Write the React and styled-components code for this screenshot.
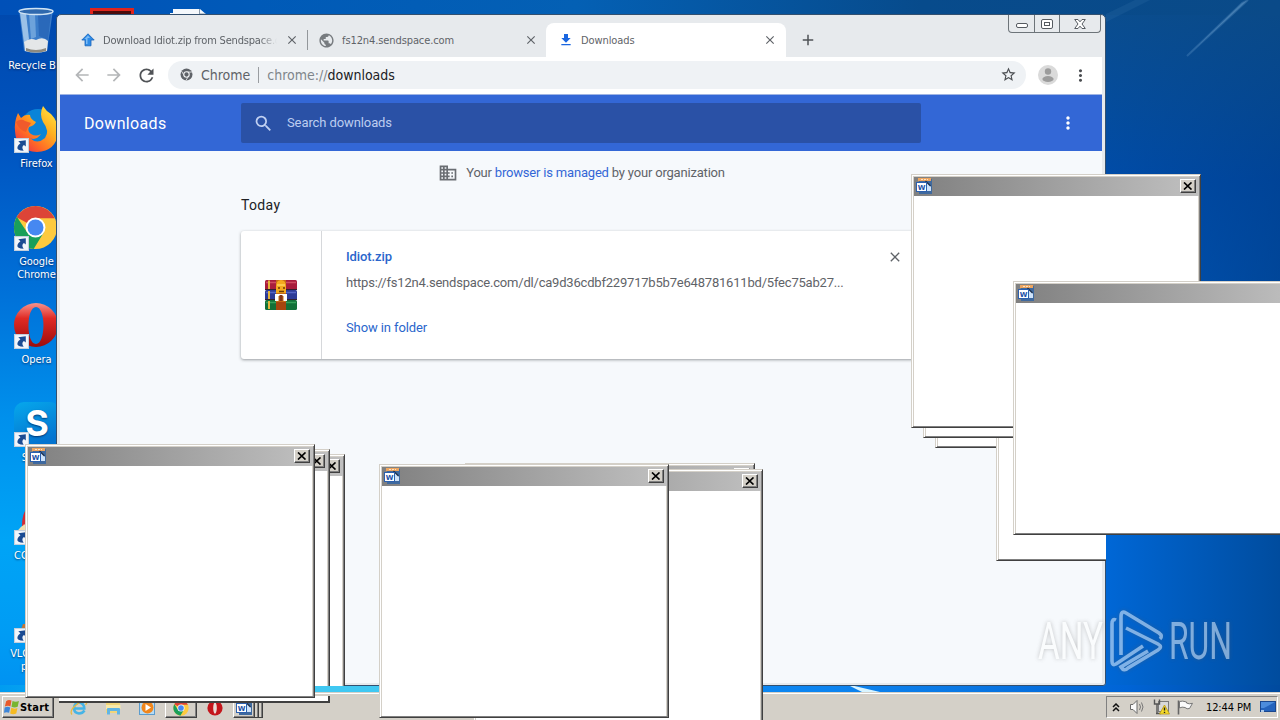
import React from "react";
import styled, { createGlobalStyle, css } from "styled-components";
import {
  MdArrowBack,
  MdArrowForward,
  MdRefresh,
  MdStarBorder,
  MdMoreVert,
  MdSearch,
  MdDomain,
  MdClose,
  MdAdd,
  MdPublic,
  MdFileDownload,
} from "react-icons/md";

const UI_FONT = `"DejaVu Sans Condensed", "DejaVu Sans", sans-serif`;

/* ---------- icons ---------- */

const RecycleBin = () => (
  <svg width="48" height="48" viewBox="0 0 48 48">
    <path d="M7 3 L12 44 Q24 48 35 44 L41 3Z" fill="#4a8ad0" fillOpacity="0.8" />
    <path d="M8 6 L12 36 L17 32 L14 6Z" fill="#c4def4" fillOpacity="0.7" />
    <path d="M17 7 L19 32 L24 30 L23 7Z" fill="#8fbce8" fillOpacity="0.6" />
    <path d="M26 8 L39 6 L36 33 L27 29Z" fill="#1f5cb0" fillOpacity="0.6" />
    <path d="M12 35 Q18 30 24 33 Q31 29 36 34 L35 44 Q24 47 13 44Z" fill="#e4e7e8" />
    <path d="M14 41 Q24 45 34 41 L34 44 Q24 47 14 44Z" fill="#8d8a80" />
    <ellipse cx="24" cy="4.5" rx="17" ry="3" fill="#2f69ae" stroke="#d0e4f4" strokeWidth="1.4" />
  </svg>
);

const Firefox = ({ size = 48 }) => (
  <svg width={size} height={size} viewBox="0 0 48 48">
    <defs>
      <linearGradient id="fox" x1="1" y1="0" x2="0.1" y2="1">
        <stop offset="0" stopColor="#fff04a" />
        <stop offset="0.4" stopColor="#ffb01f" />
        <stop offset="0.7" stopColor="#ff6a26" />
        <stop offset="1" stopColor="#e8264e" />
      </linearGradient>
    </defs>
    <circle cx="26" cy="21" r="17" fill="#0a84d8" />
    <path
      d="M31 1 Q34 6 39 9 Q47 17 46 28 Q44 46 25 47 Q4 46 3 26 Q2 17 6 8 L9 13 Q13 9 18 10 Q18 14 24 17 Q22 21 17 22 Q15 26 19 29 Q24 32 29 29 Q24 36 18 33 Q25 40 33 33 Q38 26 31 17 Q27 9 31 1Z"
      fill="url(#fox)"
    />
    <path d="M4 17 Q9 13 13 16 L19 18 Q15 23 14 27 Q7 25 4 17Z" fill="#f05a2c" />
  </svg>
);

const ChromeLogo = ({ size = 45 }) => (
  <svg width={size} height={size} viewBox="0 0 48 48">
    <circle cx="24" cy="24" r="23" fill="#fdca3f" />
    <path d="M24 24 L3.8 13 A23 23 0 0 1 44.6 14 L24 14Z" fill="#dc4437" />
    <path d="M4.1 12.5 A23 23 0 0 0 22 46.9 L33 29 L15 29Z" fill="#199f5a" />
    <circle cx="24" cy="24" r="10.6" fill="#fff" />
    <circle cx="24" cy="24" r="8.5" fill="#4688f1" />
  </svg>
);

const ChromeMono = () => (
  <svg width="13" height="13" viewBox="0 0 48 48">
    <circle cx="24" cy="24" r="22" fill="#5f6368" />
    <path d="M44 15 H24 M16 29 L6 12 M32 29 L22 46" stroke="#f1f3f4" strokeWidth="3" fill="none" />
    <circle cx="24" cy="24" r="10" fill="#5f6368" stroke="#f1f3f4" strokeWidth="4" />
  </svg>
);

const OperaLogo = ({ size = 46 }) => (
  <svg width={size} height={size} viewBox="0 0 46 46">
    <defs>
      <linearGradient id="opera" x1="0" y1="0" x2="0" y2="1">
        <stop offset="0" stopColor="#f7938c" />
        <stop offset="0.35" stopColor="#e02a24" />
        <stop offset="1" stopColor="#9c0c0c" />
      </linearGradient>
    </defs>
    <path
      fillRule="evenodd"
      d="M23 1 A22 22 0 0 1 23 45 A22 22 0 0 1 23 1Z M23 5 C13 5 13 42 23 42 C33 42 33 5 23 5Z"
      fill="url(#opera)"
    />
  </svg>
);

const SkypeLogo = () => (
  <svg width="46" height="46" viewBox="0 0 46 46">
    <defs>
      <linearGradient id="skype" x1="0" y1="0" x2="0.4" y2="1">
        <stop offset="0" stopColor="#06a8ec" />
        <stop offset="1" stopColor="#0474d0" />
      </linearGradient>
    </defs>
    <rect x="1" y="2" width="46" height="44" rx="10" fill="url(#skype)" />
    <text x="24" y="36" fontSize="36" fontWeight="700" fontFamily="Inter, sans-serif" fill="#fff" textAnchor="middle">
      S
    </text>
  </svg>
);

const CleanerLogo = () => (
  <svg width="46" height="46" viewBox="0 0 46 46">
    <path d="M9 28 Q9 13 16 9 L24 32Z" fill="#d42b34" />
    <path d="M2 38 Q6 27 16 25 L22 40Z" fill="#f2dfb0" />
  </svg>
);

const VlcLogo = () => (
  <svg width="46" height="46" viewBox="0 0 46 46">
    <path d="M13 28 L20 4 H26 L33 28Z" fill="#f07c16" />
    <path d="M4 44 L10 28 H36 L42 44Z" fill="#c0783c" />
  </svg>
);

const ShortcutArrow = () => (
  <svg width="15" height="15" viewBox="0 0 14 14">
    <rect x="0.5" y="0.5" width="13" height="13" fill="#f2f6fb" stroke="#c3cfdd" />
    <path d="M4 3 L11 2 L11 8 L9.3 6.6 Q6.5 8.5 9 12 Q2.5 12 3.2 8.5 Q3.8 6 6 4.8Z" fill="#1b4b92" />
  </svg>
);

const WordDoc = () => (
  <svg width="16" height="16" viewBox="0 0 16 16">
    <path d="M3 1 H16 V16 H3Z" fill="#3f699e" />
    <path d="M2 0 H15 V3 H2Z" fill="#eda55f" />
    <path d="M5 1.5 H12" stroke="#fbe2c4" strokeWidth="1" strokeDasharray="2 1" />
    <path d="M9 4 H10.5 L15 8.5 V13 H9Z" fill="#cfe3fa" />
    <path d="M9.5 3 L14.5 8" stroke="#1d2f4a" strokeWidth="1.3" />
    <rect x="0.5" y="4.5" width="10" height="9" fill="#fff" stroke="#2c60ae" />
    <text x="5.5" y="11.5" fontSize="7" fontWeight="700" fontFamily="DejaVu Sans, sans-serif" fill="#1d52a8" textAnchor="middle">
      W
    </text>
  </svg>
);

const CloseMark = () => (
  <svg width="10" height="8" viewBox="0 0 10 8">
    <path d="M1 0.5 L8.5 7.5 M8.5 0.5 L1 7.5" stroke="#000" strokeWidth="1.7" />
  </svg>
);

const WinRar = () => (
  <svg width="32" height="32" viewBox="0 0 32 32">
    <rect y="1" width="32" height="10" rx="1.5" fill="#a81d3c" />
    <rect y="11" width="32" height="10" rx="1.5" fill="#2c3a96" />
    <rect y="21" width="32" height="10" rx="1.5" fill="#127038" />
    <path d="M1 3.5 H31" stroke="#d04c62" strokeWidth="1.5" />
    <path d="M1 13.5 H31" stroke="#5565c4" strokeWidth="1.5" />
    <path d="M1 23.5 H31" stroke="#35a05a" strokeWidth="1.5" />
    <path d="M0 10.5 H32 M0 20.5 H32" stroke="#33202e" strokeWidth="1" />
    <path d="M4 1.5 V10 M4 12 V20 M4 22 V30" stroke="#e5b539" strokeWidth="2" />
    <rect x="11" y="1" width="10" height="30" fill="#c56a16" />
    <path d="M11 8 Q11 1 16 1 Q21 1 21 8 V14 H11Z" fill="#f4a91f" />
    <path d="M12 6 H20" stroke="#ffd45c" strokeWidth="1.5" />
    <path d="M13 9 H15 M18 9 H20 M14 12.5 H19" stroke="#6b3907" strokeWidth="1.3" />
    <path d="M10 15 H22 V22 H18.5 V17 H13.5 V22 H10Z" fill="#fff" />
    <rect x="14.5" y="16" width="3" height="6" fill="#83351b" />
    <rect x="11" y="23" width="10" height="8" fill="#a5450f" />
  </svg>
);

const SendspaceIcon = () => (
  <svg width="14" height="14" viewBox="0 0 14 14">
    <path d="M7 0.8 L13.2 7 H10 V12.8 H4 V7 H0.8Z" fill="#2f8be6" stroke="#1763ba" strokeWidth="0.8" />
    <path d="M7 2.5 L9 5 H6.5 V11 H5 V6 H3.5Z" fill="#7dbcf6" />
  </svg>
);

const StartFlag = () => (
  <svg width="16" height="16" viewBox="0 0 15 15">
    <path d="M2 2 Q4.5 0 7 1.5 L6 7 Q4 5.5 0.8 7Z" fill="#e8592a" />
    <path d="M8 1.8 Q11 3.3 14 1.8 L12.8 7.3 Q10 8.6 7 7.3Z" fill="#78b52f" />
    <path d="M0.6 8 Q3.5 6.5 5.8 8 L4.8 13 Q2.5 11.7 0 13Z" fill="#3e86d8" />
    <path d="M6.8 8.3 Q9.8 9.7 12.6 8.4 L11.5 13.5 Q8.5 15 5.8 13.5Z" fill="#f5bb22" />
  </svg>
);

const ExplorerE = () => (
  <svg width="18" height="17" viewBox="0 0 18 17">
    <path d="M14.5 11.5 Q12.5 14.5 9 14.5 Q4 14 4 9 Q4.3 4 9 3.5 Q14 4 14.3 9.5 H5" fill="none" stroke="#46b4e6" strokeWidth="2.5" />
    <path d="M2 15.5 Q-1 12 6 6 Q13 0.5 16.5 1.8 Q18 3 15.5 6" fill="none" stroke="#e8b93c" strokeWidth="1.2" />
  </svg>
);

const FolderIcon = () => (
  <svg width="17" height="15" viewBox="0 0 17 15">
    <path d="M1 2 Q1 1 2 1 H6 L8 3 H15 V13 H1Z" fill="#f2d57a" />
    <path d="M1 5 H15.5 V9 H1Z" fill="#f9eaaa" />
    <path d="M2 14.5 V9 Q2 8 3 8 H14 Q15 8 15 9 V14.5 H12 V11 H5 V14.5Z" fill="#62b5e4" />
  </svg>
);

const MediaIcon = () => (
  <svg width="17" height="16" viewBox="0 0 17 16">
    <rect x="0.5" y="1.5" width="15" height="13" fill="#b7dcf5" stroke="#5b9ccd" />
    <circle cx="8.5" cy="7.5" r="6" fill="#f0861c" />
    <path d="M6.5 4 L12 7.5 L6.5 11Z" fill="#fff" />
  </svg>
);

const OperaSmall = () => (
  <svg width="16" height="16" viewBox="0 0 16 16">
    <circle cx="8" cy="8" r="7.6" fill="#c4161c" />
    <ellipse cx="8" cy="8" rx="1.8" ry="5.8" fill="#e9dcd6" />
  </svg>
);

const VolumeIcon = () => (
  <svg width="17" height="16" viewBox="0 0 17 16">
    <path d="M1.5 5.5 H4 L8 1.5 V14.5 L4 10.5 H1.5Z" fill="#fafafa" stroke="#6a6a6a" />
    <path d="M10.5 5 Q12.5 8 10.5 11 M12.5 3.5 Q15.5 8 12.5 12.5" fill="none" stroke="#777" strokeWidth="1" />
  </svg>
);

const NetworkIcon = () => (
  <svg width="17" height="16" viewBox="0 0 17 16">
    <rect x="5.5" y="2.5" width="10" height="10" fill="#d9d9d9" stroke="#7b7b7b" />
    <path d="M1.5 0.5 V5 H6.5 V0.5 M4 5 V14 M3 14.5 H8" fill="none" stroke="#555" strokeWidth="1.4" />
    <path d="M11.5 6 L16.5 15 H6.5Z" fill="#f7dc2c" stroke="#b99813" strokeWidth="0.8" />
    <path d="M11.5 8.5 V11.5 M11.5 12.7 V14" stroke="#222" strokeWidth="1.4" />
  </svg>
);

const FlagIcon = () => (
  <svg width="17" height="15" viewBox="0 0 17 15">
    <path d="M1.5 0.5 V14.5" stroke="#666" strokeWidth="1.6" />
    <path d="M2.5 1.5 Q5.5 0.5 9.5 2 V3 Q12 4.5 15.5 3.3 L12.5 8.5 Q10 9.5 8 7.5 Q5 6.5 2.5 8Z" fill="#fbfbfb" stroke="#777" />
  </svg>
);

const DesktopIcon = () => (
  <svg width="16" height="12" viewBox="0 0 16 12">
    <rect x="0.5" y="0.5" width="15" height="10" fill="#2463bd" stroke="#1a478e" />
    <path d="M1 1 H15 L4 7 H1Z" fill="#4c8cdc" />
    <path d="M1 10 H4" stroke="#d9ecff" strokeWidth="1.5" />
  </svg>
);

const Chevrons = () => (
  <svg width="8" height="9" viewBox="0 0 8 9">
    <path d="M1 4 L4 1 L7 4 M1 8 L4 5 L7 8" fill="none" stroke="#111" strokeWidth="1.5" />
  </svg>
);

const AnyRunMark = () => (
  <svg width="220" height="72" viewBox="0 0 220 72">
    <g fontFamily="Roboto, sans-serif" fontSize="51" fontWeight="400" fill="#fff">
      <text x="4" y="54.5" textLength="65" lengthAdjust="spacingAndGlyphs">ANY</text>
      <text x="135" y="54.5" textLength="63" lengthAdjust="spacingAndGlyphs">RUN</text>
    </g>
    <path
      d="M82 15 Q78 13 78 19 V56 Q78 61 82 59 L109 41 M87 50 V12 Q87 5 92 8 L125 28 Q129 31 126 34 M92 23 L124 39 Q129 42 124 45 L94 63 Q90 67 87 62 L114 46"
      transform="translate(0 1)"
      fill="none"
      stroke="#fff"
      strokeWidth="3.6"
    />
  </svg>
);

/* ---------- desktop ---------- */

const shortcuts = [
  { id: "bin", label: "Recycle Bin", icon: <RecycleBin /> },
  { id: "firefox", label: "Firefox", icon: <Firefox />, linked: true },
  { id: "chrome", label: "Google Chrome", icon: <ChromeLogo />, linked: true },
  { id: "opera", label: "Opera", icon: <OperaLogo />, linked: true },
  { id: "skype", label: "Skype", icon: <SkypeLogo />, linked: true },
  { id: "cleaner", label: "CCleaner", icon: <CleanerLogo />, linked: true },
  { id: "vlc", label: "VLC media player", icon: <VlcLogo />, linked: true },
];

// popups still painted only where they overlap the browser, back to front
const clippedPopups = [
  { x: 935, y: 194 },
  { x: 996, y: 307 },
  { x: 923, y: 184 },
  { x: 55, y: 454 },
  { x: 40, y: 449 },
];

const popups = [
  { x: 465, y: 463 },
  { x: 473, y: 469 },
  { x: 379, y: 464 },
  { x: 25, y: 444 },
  { x: 911, y: 174 },
  { x: 1013, y: 281 },
];

const Popup = ({ x, y }) => (
  <PopupFrame $x={x} $y={y}>
    <PopupTitle>
      <WordDoc />
      <PopupClose>
        <CloseMark />
      </PopupClose>
    </PopupTitle>
    <PopupBody />
  </PopupFrame>
);

const Browser = () => (
  <BrowserFrame>
    <TabStrip>
      <Tab $width={242}>
        <SendspaceIcon />
        <TabTitle $faded $spacing="-0.18px">Download Idiot.zip from Sendspace.c</TabTitle>
        <MdClose size={14} />
      </Tab>
      <Tab $width={238} $divided>
        <MdPublic size={17} color="#777b7f" />
        <TabTitle>fs12n4.sendspace.com</TabTitle>
        <MdClose size={14} />
      </Tab>
      <Tab $width={240} $active>
        <MdFileDownload size={16} color="#1a66e0" />
        <TabTitle>Downloads</TabTitle>
        <MdClose size={14} />
      </Tab>
      <NewTab>
        <MdAdd size={18} />
      </NewTab>
      <Caption>
        <CaptionButton $width={25}>
          <MinimizeGlyph width="12" height="5" viewBox="0 0 12 5">
            <rect x="0.5" y="0.5" width="11" height="4" rx="1.5" fill="#fff" stroke="#555a60" />
          </MinimizeGlyph>
        </CaptionButton>
        <CaptionButton $width={25}>
          <svg width="12" height="10" viewBox="0 0 12 10">
            <rect x="0.5" y="0.5" width="11" height="9" rx="1.5" fill="#fff" stroke="#555a60" />
            <rect x="3.5" y="3.5" width="5" height="3" fill="#fff" stroke="#555a60" />
          </svg>
        </CaptionButton>
        <CaptionButton $width={41}>
          <svg width="12" height="10" viewBox="0 0 12 10">
            <path d="M0.7 0.5 H4 L6 2.8 L8 0.5 H11.3 L8 5 L11.3 9.5 H8 L6 7.2 L4 9.5 H0.7 L4 5Z" fill="#fff" stroke="#555a60" />
          </svg>
        </CaptionButton>
      </Caption>
    </TabStrip>

    <Toolbar>
      <MdArrowBack size={20} color="#b4b6b8" />
      <MdArrowForward size={20} color="#b4b6b8" />
      <MdRefresh size={21} color="#505357" />
      <Omnibox>
        <ChromeMono />
        <SiteName>Chrome</SiteName>
        <Address>
          chrome://<b>downloads</b>
        </Address>
        <MdStarBorder size={17} color="#4b4e52" />
      </Omnibox>
      <Avatar>
        <svg width="20" height="20" viewBox="0 0 20 20">
          <circle cx="10" cy="10" r="10" fill="#dadada" />
          <circle cx="10" cy="6.5" r="3.2" fill="#9c9c9c" />
          <ellipse cx="10" cy="14" rx="5.6" ry="3" fill="#9c9c9c" />
        </svg>
      </Avatar>
      <MdMoreVert size={19} color="#4b4e52" />
    </Toolbar>

    <Page>
      <PageHeader>
        <PageTitle>Downloads</PageTitle>
        <SearchBox>
          <MdSearch size={21} color="#c0d0f2" />
          <SearchHint>Search downloads</SearchHint>
        </SearchBox>
        <MdMoreVert size={20} color="#fff" />
      </PageHeader>
      <Managed>
        <MdDomain size={20} color="#6a6e73" />
        <span>
          Your <a>browser is managed</a> by your organization
        </span>
      </Managed>
      <DayTitle>Today</DayTitle>
      <Card>
        <CardIcon>
          <WinRar />
        </CardIcon>
        <CardDetails>
          <FileLink>Idiot.zip</FileLink>
          <FileUrl>https://fs12n4.sendspace.com/dl/ca9d36cdbf229717b5b7e648781611bd/5fec75ab27...</FileUrl>
          <ShowLink>Show in folder</ShowLink>
        </CardDetails>
        <MdClose size={16} color="#5f6368" />
      </Card>
    </Page>
  </BrowserFrame>
);

const App = () => (
  <>
    <GlobalStyle />
    <Desktop>
      <Wallpaper>
        <svg width="1280" height="720" viewBox="0 0 1280 720">
          <path d="M1248 0 L1187 56 L1242 3Z" fill="#8fc0e8" fillOpacity="0.3" stroke="#8fc0e8" strokeOpacity="0.2" strokeWidth="2" />
          <path d="M1150 0 L1106 22 V14 L1135 0Z" fill="#5b93c4" fillOpacity="0.12" />
          <path d="M846 684 L880 692 H862Z" fill="#d8f4ff" />
        </svg>
      </Wallpaper>
      <Shortcuts>
        {shortcuts.map((item) => (
          <Shortcut key={item.id}>
            <ShortcutPicture>
              {item.icon}
              {item.linked && (
                <ShortcutBadge>
                  <ShortcutArrow />
                </ShortcutBadge>
              )}
            </ShortcutPicture>
            <span>{item.label}</span>
          </Shortcut>
        ))}
      </Shortcuts>
      <AcrobatEdge />
      <DocumentEdge>
        <svg width="38" height="6" viewBox="0 0 38 6">
          <path d="M3 0 H30 L37 6 H-6 V4 H3Z" fill="#f4f8fc" />
          <path d="M29.5 0 V5 H35" fill="none" stroke="#8899aa" />
        </svg>
      </DocumentEdge>

      <Browser />

      <BrowserClip>
        {clippedPopups.map((popup) => (
          <Popup key={popup.x} {...popup} />
        ))}
      </BrowserClip>

      <Taskbar>
        <StartButton>
          <StartFlag />
          Start
        </StartButton>
        <Launchers>
          <Launcher><ExplorerE /></Launcher>
          <Launcher><FolderIcon /></Launcher>
          <Launcher><MediaIcon /></Launcher>
          <Launcher $raised><ChromeLogo size={16} /></Launcher>
          <Launcher><OperaSmall /></Launcher>
        </Launchers>
        <WordGroup>
          <WordDoc />
        </WordGroup>
        <GroupEdge />
        <GroupEdge />
        <Tray>
          <Chevrons />
          <VolumeIcon />
          <NetworkIcon />
          <FlagIcon />
          <Clock>12:44 PM</Clock>
          <DesktopIcon />
        </Tray>
      </Taskbar>
      <PopupRemnant />

      {popups.map((popup) => (
        <Popup key={popup.x} {...popup} />
      ))}

      <Watermark>
        <AnyRunMark />
      </Watermark>
    </Desktop>
  </>
);

/* ---------- styles ---------- */

const GlobalStyle = createGlobalStyle`
  * {
    box-sizing: border-box;
  }
  body {
    margin: 0;
    overflow: hidden;
    font-family: ${UI_FONT};
  }
  svg {
    display: block;
    flex: none;
  }
`;

const Desktop = styled.div`
  position: relative;
  width: 1280px;
  height: 720px;
  overflow: hidden;
  background:
    linear-gradient(to right, #0050b8, #005ab8 20%, #0460b4 45%, #074b8c 72%, #0a4a88) top / 100% 15px no-repeat,
    linear-gradient(to right, #009cf0, #40c8f2 22%, #40c8f2 31%, #0c8cf4 48%, #0c84f0 65%, #0a78e4 75%, #0064d6 88%, #004a9e)
      0 685px / 100% 8px no-repeat,
    linear-gradient(to bottom, #0048ac, #0054c0 20%, #0070d8 40%, #0090ec 58%, #00a4f6 75%, #009cf4 88%, #008cf0) left / 70px 100% no-repeat,
    linear-gradient(to bottom, rgba(12, 74, 132, 0.9), rgba(0, 64, 148, 0.7) 25%, rgba(0, 64, 150, 0) 75%) right / 180px 100% no-repeat,
    linear-gradient(to right, #0068d8 86%, #004c9e);
`;

const Wallpaper = styled.div`
  position: absolute;
  inset: 0;
`;

const Shortcuts = styled.div`
  position: absolute;
  top: 7px;
  left: 0;
  display: flex;
  flex-direction: column;
`;

const Shortcut = styled.div`
  display: flex;
  flex-direction: column;
  align-items: center;
  gap: 4px;
  width: 73px;
  height: 98px;
  padding: 0 6px;
  color: #fff;
  font-size: 11px;
  line-height: 13px;
  letter-spacing: -0.05px;
  text-align: center;
  text-shadow: 0 1px 2px rgba(0, 20, 70, 0.7);
`;

const ShortcutPicture = styled.div`
  position: relative;
  display: flex;
  align-items: center;
  justify-content: center;
  width: 48px;
  height: 48px;
  margin-right: 2px;
`;

const ShortcutBadge = styled.div`
  position: absolute;
  left: 2px;
  bottom: 0;
`;

const AcrobatEdge = styled.div`
  position: absolute;
  left: 90px;
  top: 8px;
  width: 44px;
  height: 10px;
  border: 3px solid #e0241c;
  background: #4a0c0c;
`;

const DocumentEdge = styled.div`
  position: absolute;
  left: 170px;
  top: 9px;
`;

const BrowserFrame = styled.div`
  position: absolute;
  left: 56px;
  top: 14px;
  width: 1050px;
  height: 672px;
  display: flex;
  flex-direction: column;
  padding: 0 3px 2px;
  border: 1px solid #33506f;
  border-radius: 5px 5px 3px 3px;
  background: #e7eaed;
`;

const TabStrip = styled.div`
  display: flex;
  height: 42px;
  padding: 8px 1px 0 5px;
`;

const Tab = styled.div`
  display: flex;
  align-items: center;
  gap: 8px;
  width: ${(props) => props.$width}px;
  height: 34px;
  padding: 0 8px 0 16px;
  border-radius: 8px 8px 0 0;
  color: #5f6368;
  ${(props) =>
    props.$active &&
    css`
      margin-left: 1px;
      padding: 0 9px 0 12px;
      gap: 7px;
      background: #fff;
    `}
  ${(props) =>
    props.$divided &&
    css`
      gap: 7px;
      padding: 0 7px 0 10px;
      border-left: 1px solid #93979b;
      border-radius: 0;
      height: 20px;
      margin-top: 7px;
    `}
`;

const TabTitle = styled.span`
  flex: 1;
  overflow: hidden;
  margin-top: 2px;
  padding-bottom: 1px;
  white-space: nowrap;
  font-size: 11px;
  line-height: 16px;
  letter-spacing: ${(props) => props.$spacing || "-0.1px"};
  ${(props) =>
    props.$faded &&
    css`
      mask-image: linear-gradient(to right, #000 90%, transparent);
    `}
`;

const NewTab = styled.div`
  margin: 8px 0 0 13px;
  color: #505357;
`;

const Caption = styled.div`
  display: flex;
  height: 18px;
  margin: -8px 0 0 auto;
  border: 1px solid #6d7479;
  border-top: 0;
  border-radius: 0 0 4px 4px;
`;

const CaptionButton = styled.div`
  display: flex;
  align-items: center;
  justify-content: center;
  width: ${(props) => props.$width}px;
  & + & {
    border-left: 1px solid #6d7479;
  }
`;

const MinimizeGlyph = styled.svg`
  margin-top: 4px;
`;

const Toolbar = styled.div`
  display: flex;
  align-items: center;
  gap: 12px;
  height: 37px;
  padding: 0 12px 1px;
  background: #fff;
`;

const Omnibox = styled.div`
  display: flex;
  flex: 1;
  align-items: center;
  height: 28px;
  margin-left: -1px;
  padding: 0 9px 1px 12px;
  border-radius: 14px;
  background: #eff2f5;
  color: #5f6368;
  font-size: 14px;
  letter-spacing: -0.01px;
  svg:last-child {
    margin-left: auto;
  }
`;

const SiteName = styled.span`
  margin-left: 8px;
  padding-right: 8px;
  border-right: 1px solid #9a9da1;
  line-height: 16px;
`;

const Address = styled.span`
  margin-left: 8px;
  color: #80868b;
  b {
    color: #202124;
    font-weight: 400;
  }
`;

const Avatar = styled.div`
  margin-right: 1px;
`;

const Page = styled.div`
  flex: 1;
  border-top: 1px solid #9fb4e4;
  background: #f6f9fc;
  font-family: Roboto, sans-serif;
`;

const PageHeader = styled.div`
  display: flex;
  align-items: center;
  height: 56px;
  padding: 0 24px;
  background: #3367d6;
  > svg {
    margin-left: auto;
  }
`;

const PageTitle = styled.h1`
  width: 157px;
  margin: 0;
  color: #fff;
  font-size: 16px;
  font-weight: 400;
  letter-spacing: 0.34px;
`;

const SearchBox = styled.div`
  display: flex;
  align-items: center;
  gap: 13px;
  width: 680px;
  height: 40px;
  padding-left: 12px;
  border-radius: 2px;
  background: #2a51a6;
`;

const SearchHint = styled.span`
  margin-top: -2px;
  color: #bccdf0;
  font-size: 13px;
  letter-spacing: -0.1px;
`;

const Managed = styled.div`
  display: flex;
  align-items: center;
  justify-content: center;
  gap: 8px;
  height: 43px;
  padding-left: 1px;
  color: #5f6368;
  font-size: 13px;
  letter-spacing: -0.19px;
  a {
    color: #3367d6;
  }
`;

const DayTitle = styled.h2`
  margin: 0 0 0 181px;
  color: #202124;
  font-size: 14px;
  font-weight: 400;
  line-height: 22px;
  letter-spacing: 0.35px;
`;

const Card = styled.div`
  display: flex;
  width: 680px;
  height: 128px;
  margin: 15px 0 0 181px;
  padding-right: 18px;
  border-radius: 3px;
  background: #fff;
  box-shadow: 0 1px 3px rgba(60, 64, 67, 0.5);
  > svg {
    margin: 18px 0 0 auto;
  }
`;

const CardIcon = styled.div`
  display: flex;
  align-items: center;
  justify-content: center;
  width: 81px;
  border-right: 1px solid #d6d8db;
`;

const CardDetails = styled.div`
  display: flex;
  flex-direction: column;
  padding: 16px 0 0 24px;
  font-size: 13px;
  line-height: 20px;
  letter-spacing: -0.1px;
  white-space: nowrap;
`;

const FileLink = styled.a`
  color: #2a66cc;
  font-weight: 500;
`;

const FileUrl = styled.span`
  margin-top: 6px;
  color: #5f6368;
  letter-spacing: -0.2px;
`;

const ShowLink = styled.a`
  margin-top: 25px;
  color: #2a66cc;
`;

const BrowserClip = styled.div`
  position: absolute;
  left: 0;
  top: 0;
  width: 1106px;
  height: 686px;
  overflow: hidden;
`;

const PopupFrame = styled.div`
  position: absolute;
  left: ${(props) => props.$x}px;
  top: ${(props) => props.$y}px;
  display: flex;
  flex-direction: column;
  width: 290px;
  height: 254px;
  padding: 1px 1px 0;
  border: 1px solid;
  border-color: #d4d0c8 #404040 #404040 #d4d0c8;
  background: #d4d0c8;
  box-shadow: inset 1px 1px #fff, inset -1px -1px #808080;
`;

const PopupTitle = styled.div`
  display: flex;
  align-items: center;
  justify-content: space-between;
  height: 19px;
  margin: 1px 0 0 1px;
  padding: 0 3px 1px 2px;
  background: linear-gradient(to right, #808080, #c0c0c0);
`;

const PopupClose = styled.div`
  display: flex;
  align-items: center;
  justify-content: center;
  width: 16px;
  height: 14px;
  border: 1px solid;
  border-color: #fff #404040 #404040 #fff;
  background: #d4d0c8;
  box-shadow: inset -1px -1px #808080;
`;

const PopupBody = styled.div`
  flex: 1;
  margin: 0 1px 1px;
  background: #fff;
`;

const Taskbar = styled.div`
  position: absolute;
  left: 0;
  bottom: 0;
  display: flex;
  align-items: flex-end;
  width: 1280px;
  height: 28px;
  padding: 0 2px 2px;
  border-top: 1px solid #d4d0c8;
  background: #d4d0c8;
  box-shadow: inset 0 1px #fff;
`;

const raised = css`
  border: 1px solid;
  border-color: #fff #404040 #404040 #fff;
  box-shadow: inset -1px -1px #808080;
`;

const StartButton = styled.div`
  display: flex;
  align-items: center;
  width: 52px;
  height: 22px;
  padding-left: 1px;
  font-size: 11px;
  font-weight: 700;
  letter-spacing: 0.2px;
  ${raised}
`;

const Launchers = styled.div`
  display: flex;
  margin-left: 9px;
`;

const Launcher = styled.div`
  display: flex;
  align-items: center;
  justify-content: center;
  width: 32px;
  height: 22px;
  padding-top: 1px;
  margin-right: 2px;
  ${(props) => props.$raised && raised}
`;

const WordGroup = styled.div`
  display: flex;
  align-items: center;
  justify-content: center;
  width: 22px;
  height: 22px;
  ${raised}
`;

const GroupEdge = styled.div`
  width: 4px;
  height: 22px;
  border-right: 1px solid #404040;
  border-bottom: 1px solid #404040;
  box-shadow: inset -1px 0 #808080;
`;

const Tray = styled.div`
  display: flex;
  align-items: center;
  gap: 7px;
  width: 172px;
  height: 22px;
  margin-left: auto;
  padding: 0 1px 0 5px;
  border: 1px solid;
  border-color: #808080 #fff #fff #808080;
  svg:first-child {
    margin-right: 2px;
  }
`;

const Clock = styled.span`
  flex: 1;
  padding-left: 5px;
  color: #000;
  font-size: 11px;
  letter-spacing: -0.12px;
  white-space: nowrap;
`;

const PopupRemnant = styled.div`
  position: absolute;
  left: 59px;
  top: 696px;
  width: 271px;
  height: 7px;
  border-right: 2px solid #404040;
  border-bottom: 2px solid #404040;
  background: #fff;
`;

const Watermark = styled.div`
  position: absolute;
  left: 1034px;
  top: 604px;
  opacity: 0.5;
  filter: drop-shadow(0 0 2px rgba(90, 90, 90, 0.7));
`;

export default App;
